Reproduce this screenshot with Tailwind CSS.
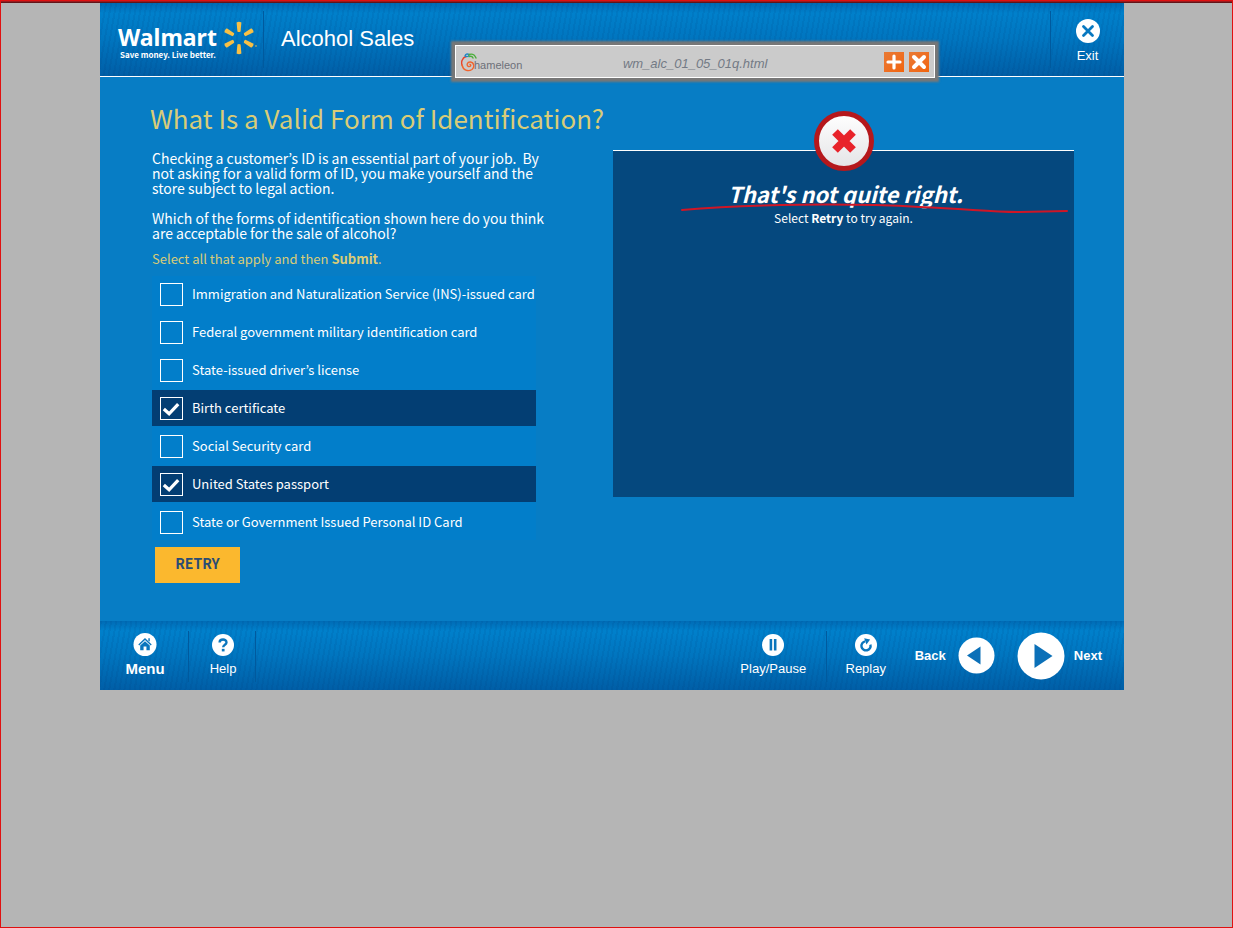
<!DOCTYPE html>
<html lang="en">
<head>
<meta charset="utf-8">
<title>Alcohol Sales</title>
<script src="https://cdn.jsdelivr.net/npm/@tailwindcss/browser@4"></script>
</head>
<body class="min-h-screen border border-[#e01010] bg-[#b5b5b5] font-['Liberation_Sans',sans-serif] text-white">
<div class="h-0.5 bg-linear-to-b from-[#b81c20] to-[#4a1014]"></div>
<div class="relative ml-[99px] max-w-[1024px] bg-[#077dc5]">

  <header class="flex h-[74px] items-stretch border-b border-white bg-[repeating-linear-gradient(100deg,rgba(0,50,110,0.09)_0px,rgba(0,50,110,0.09)_2px,transparent_2px,transparent_5px),linear-gradient(#006bb5,#0080cb_14%,#0075bf_50%,#005ea6)]">
    <div class="my-2 w-[164px] border-r border-[#005a9e] pl-[18px] pt-2.5">
      <div class="flex items-start gap-1.5">
        <div class="w-[98px] pt-1">
          <div class="font-['Noto_Sans',sans-serif] text-[23px] leading-[25px] font-bold">Walmart</div>
          <div class="pl-0.5 font-['Noto_Sans_CJK_KR',sans-serif] text-[8px] leading-[9px] font-bold whitespace-nowrap">Save money. Live better.</div>
        </div>
        <svg class="h-[34px] w-9 shrink-0" viewBox="0 0 36 34" fill="#f8c045" aria-hidden="true">
          <g id="ray"><path d="M14.600 1.500Q17 0 19.400 1.500L18.600 10.500Q17 11.700 15.400 10.500Z"/></g>
          <use href="#ray" transform="rotate(60 17 17)"/><use href="#ray" transform="rotate(120 17 17)"/><use href="#ray" transform="rotate(180 17 17)"/><use href="#ray" transform="rotate(240 17 17)"/><use href="#ray" transform="rotate(300 17 17)"/>
          <circle cx="34" cy="25" r="0.8"/>
        </svg>
      </div>
    </div>
    <h1 class="self-center pb-0.5 pl-[17px] text-[22px] leading-7">Alcohol Sales</h1>
    <div class="my-2 ml-auto flex w-[74px] justify-center border-l border-[#005a9e] pt-2">
      <button type="button" class="flex flex-col items-center gap-[5px] text-[13px] leading-4">
        <svg class="size-6" viewBox="0 0 24 24" aria-hidden="true"><circle cx="12" cy="12" r="12" fill="#fff"/><path d="M7.500 7.500l9 9M16.500 7.500l-9 9" stroke="#0878c0" stroke-width="2.800" stroke-linecap="round"/></svg>
        Exit
      </button>
    </div>
  </header>

  <div class="absolute top-[42px] left-[355px] flex h-[33px] w-[480px] items-center border border-white bg-[#cbcbcb] pr-[5px] pl-[5px] shadow-[0_0_2px_4px_#777777]">
    <svg class="h-5 w-[17px]" viewBox="0 0 17 20" fill="none" stroke-width="1.400" stroke-linecap="round" aria-hidden="true">
      <path d="M5 4.500C1 6 0 10 1 13" stroke="#e8412b"/><path d="M1 13C2 18 7 20 11 17.500C14 15 13 10.500 9.500 10C6 9.700 5.200 13.500 7.500 14.500C9.500 15 10.500 13 9 12.300" stroke="#f0642e"/><path d="M4 4Q5 1 8 2.500Q8 5 5 4.500" stroke="#1d86c8"/><path d="M8 2.500Q13 1 15 6M8 4.500Q11 3.500 12 6" stroke="#4caf3c"/>
    </svg>
    <span class="-ml-1 pt-1.5 text-[11px] leading-4 text-[#6d7079]">hameleon</span>
    <span class="flex-1 pt-1 pl-4 text-center text-[13px] leading-4 text-[#737a85] italic">wm_alc_01_05_01q.html</span>
    <div class="flex gap-[5px] pl-8">
      <button type="button" aria-label="Expand" class="size-5 bg-linear-to-br from-[#e97a34] to-[#f26408]"><svg viewBox="0 0 20 20" stroke="#fff" stroke-width="3.200" stroke-linecap="round"><path d="M10 4v12M4 10h12"/></svg></button>
      <button type="button" aria-label="Close" class="size-5 bg-linear-to-br from-[#e97a34] to-[#f26408]"><svg viewBox="0 0 20 20" stroke="#fff" stroke-width="4" stroke-linecap="round"><path d="M5 5l10 10M15 5L5 15"/></svg></button>
    </div>
  </div>

  <main class="flex min-h-[544px] justify-between pr-[50px] pl-[50px] font-['Noto_Sans_CJK_KR',sans-serif]">
    <section class="pt-[23px]">
      <h2 class="text-[26px] leading-9 whitespace-nowrap text-[#d9cc78]">What Is a Valid Form of Identification?</h2>
      <div class="w-[386px] pt-[15px] pl-0.5">
        <div class="text-[14px] leading-[15px] whitespace-nowrap">
          <p>Checking a customer’s ID is an essential part of your job.&nbsp; By<br>not asking for a valid form of ID, you make yourself and the<br>store subject to legal action.</p>
          <p class="pt-[15px]">Which of the forms of identification shown here do you think<br>are acceptable for the sale of alcohol?</p>
        </div>
        <p class="pt-2.5 text-[13px] leading-[15px] text-[#d9cc78]">Select all that apply and then <b>Submit</b>.</p>
        <div class="mt-2.5 flex flex-col gap-0.5 bg-[#027eca] text-[13px] leading-5 whitespace-nowrap">
          <label class="flex h-9 items-center gap-[9px] px-2 has-checked:bg-[#033e73]"><span class="grid"><input type="checkbox" class="peer col-start-1 row-start-1 size-[23px] appearance-none border border-white"><svg class="invisible col-start-1 row-start-1 size-[23px] peer-checked:visible" viewBox="0 0 24 24" fill="none" stroke="#fff" stroke-width="3.400"><path d="M4 12.500L9.500 17.500L19 7.500"/></svg></span>Immigration and Naturalization Service (INS)-issued card</label>
          <label class="flex h-9 items-center gap-[9px] px-2 has-checked:bg-[#033e73]"><span class="grid"><input type="checkbox" class="peer col-start-1 row-start-1 size-[23px] appearance-none border border-white"><svg class="invisible col-start-1 row-start-1 size-[23px] peer-checked:visible" viewBox="0 0 24 24" fill="none" stroke="#fff" stroke-width="3.400"><path d="M4 12.500L9.500 17.500L19 7.500"/></svg></span>Federal government military identification card</label>
          <label class="flex h-9 items-center gap-[9px] px-2 has-checked:bg-[#033e73]"><span class="grid"><input type="checkbox" class="peer col-start-1 row-start-1 size-[23px] appearance-none border border-white"><svg class="invisible col-start-1 row-start-1 size-[23px] peer-checked:visible" viewBox="0 0 24 24" fill="none" stroke="#fff" stroke-width="3.400"><path d="M4 12.500L9.500 17.500L19 7.500"/></svg></span>State-issued driver’s license</label>
          <label class="flex h-9 items-center gap-[9px] px-2 has-checked:bg-[#033e73]"><span class="grid"><input type="checkbox" checked class="peer col-start-1 row-start-1 size-[23px] appearance-none border border-white"><svg class="invisible col-start-1 row-start-1 size-[23px] peer-checked:visible" viewBox="0 0 24 24" fill="none" stroke="#fff" stroke-width="3.400"><path d="M4 12.500L9.500 17.500L19 7.500"/></svg></span>Birth certificate</label>
          <label class="flex h-9 items-center gap-[9px] px-2 has-checked:bg-[#033e73]"><span class="grid"><input type="checkbox" class="peer col-start-1 row-start-1 size-[23px] appearance-none border border-white"><svg class="invisible col-start-1 row-start-1 size-[23px] peer-checked:visible" viewBox="0 0 24 24" fill="none" stroke="#fff" stroke-width="3.400"><path d="M4 12.500L9.500 17.500L19 7.500"/></svg></span>Social Security card</label>
          <label class="flex h-9 items-center gap-[9px] px-2 has-checked:bg-[#033e73]"><span class="grid"><input type="checkbox" checked class="peer col-start-1 row-start-1 size-[23px] appearance-none border border-white"><svg class="invisible col-start-1 row-start-1 size-[23px] peer-checked:visible" viewBox="0 0 24 24" fill="none" stroke="#fff" stroke-width="3.400"><path d="M4 12.500L9.500 17.500L19 7.500"/></svg></span>United States passport</label>
          <label class="flex h-9 items-center gap-[9px] px-2 has-checked:bg-[#033e73]"><span class="grid"><input type="checkbox" class="peer col-start-1 row-start-1 size-[23px] appearance-none border border-white"><svg class="invisible col-start-1 row-start-1 size-[23px] peer-checked:visible" viewBox="0 0 24 24" fill="none" stroke="#fff" stroke-width="3.400"><path d="M4 12.500L9.500 17.500L19 7.500"/></svg></span>State or Government Issued Personal ID Card</label>
        </div>
        <button type="button" class="mt-[7px] ml-[3px] h-9 w-[85px] bg-[#fbb82e] pb-1 text-[14px] leading-5 font-bold text-[#2b4c74]">RETRY</button>
      </div>
    </section>

    <section class="relative mt-[73px] h-[347px] w-[461px] border-t border-white bg-[#05487e] pt-[27px] text-center">
      <svg class="absolute -top-10 left-[201px] size-[60px]" viewBox="0 0 60 60" aria-hidden="true">
        <defs><linearGradient id="disc" x2="0" y2="1"><stop stop-color="#fff"/><stop offset="1" stop-color="#e4e4e6"/></linearGradient></defs>
        <circle cx="30" cy="30" r="27.500" fill="url(#disc)" stroke="#b5181c" stroke-width="5"/>
        <path d="M21 21L39 39M39 21L21 39" stroke="#e8232a" stroke-width="8"/>
      </svg>
      <h3 class="pl-1 text-[22px] leading-[30px] font-bold italic">That's not quite right.</h3>
      <p class="text-[12px] leading-5">Select <b>Retry</b> to try again.</p>
      <svg class="absolute top-[52px] left-[67px] h-3 w-[390px]" viewBox="0 0 390 12" fill="none" stroke="#cf1626" stroke-width="2" stroke-linecap="round" aria-hidden="true"><path d="M2 7C70 1 170 0 240 4C290 6 310 9 340 9L387 8"/></svg>
    </section>
  </main>

  <footer class="flex h-[69px] items-stretch bg-[repeating-linear-gradient(100deg,rgba(0,50,110,0.09)_0px,rgba(0,50,110,0.09)_2px,transparent_2px,transparent_5px),linear-gradient(#006bb5,#0080cb_14%,#0075bf_50%,#005ea6)]">
    <div class="mt-2.5 mb-2 flex w-[89px] justify-center border-r border-[#005a9e] pt-0.5 pl-0.5">
      <button type="button" class="flex flex-col items-center text-[15px] leading-[26px] font-bold">
        <svg class="size-6" viewBox="0 0 24 24" aria-hidden="true"><circle cx="12" cy="12" r="12" fill="#fff"/><g fill="#0b76bd"><path d="M12 5.300L19 12L18 13L12 7.300L6 13L5 12Z"/><path d="M7 13L12 8.500L17 13V18H13.500V14H10.500V18H7Z"/><path d="M15.500 5.500H17V9L15.500 7.500Z"/></g></svg>
        Menu
      </button>
    </div>
    <div class="mt-2.5 mb-2 flex w-[67px] justify-center border-r border-[#005a9e] pt-[3px] pl-0.5">
      <button type="button" class="flex flex-col items-center text-[13px] leading-[26px]">
        <svg class="size-6" viewBox="0 0 24 24" aria-hidden="true"><circle cx="12" cy="12" r="12" fill="#fff"/><path d="M8.300 9.300C8.300 5 15.800 5 15.800 9.200C15.800 11.800 12.200 11.600 12.200 14.500" fill="none" stroke="#0b76bd" stroke-width="2.600"/><rect x="10.700" y="16.200" width="3" height="2.800" fill="#0b76bd"/></svg>
        Help
      </button>
    </div>
    <div class="mt-2.5 mb-2 ml-auto flex w-[106px] justify-center border-r border-[#005a9e] pt-[3px]">
      <button type="button" class="flex flex-col items-center text-[13px] leading-[26px]">
        <svg class="size-6" viewBox="0 0 24 24" aria-hidden="true"><circle cx="12" cy="12" r="12" fill="#fff"/><path d="M8.300 5.500h2.800v12.500h-2.800zM13 5.500h2.800v12.500h-2.800z" fill="#0b76bd"/></svg>
        Play/Pause
      </button>
    </div>
    <div class="mt-2.5 mb-2 flex w-[78px] justify-center pt-[3px]">
      <button type="button" class="flex flex-col items-center text-[13px] leading-[26px]">
        <svg class="size-6" viewBox="0 0 24 24" aria-hidden="true"><circle cx="12" cy="12" r="12" fill="#fff"/><path d="M16.800 11.500A5 5 0 1 1 11 8" fill="none" stroke="#0b76bd" stroke-width="2.600"/><path d="M10 4.500L16.500 6L12.500 11.500Z" fill="#0b76bd"/></svg>
        Replay
      </button>
    </div>
    <div class="flex items-center pr-[22px] pl-2.5 text-[13px] font-bold">
      <button type="button" class="flex items-center gap-3">Back
        <svg class="size-[37px]" viewBox="0 0 37 37" aria-hidden="true"><circle cx="18.500" cy="18.500" r="18" fill="#fff"/><path d="M9 18.500L22.500 9.500V27.500Z" fill="#0b70b8"/></svg>
      </button>
      <button type="button" class="ml-[22px] flex items-center gap-[9px]">
        <svg class="size-12" viewBox="0 0 48 48" aria-hidden="true"><circle cx="24" cy="24" r="23.500" fill="#fff"/><path d="M17.500 12L35.500 24L17.500 36Z" fill="#0b70b8"/></svg>
        Next</button>
    </div>
  </footer>
</div>
</body>
</html>
